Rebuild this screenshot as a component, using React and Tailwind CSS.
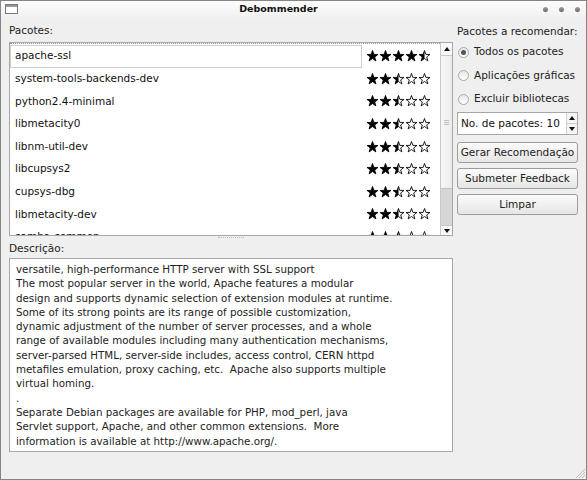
import React from "react";

const STAR = "M6 0 L7.41 4.06 L11.71 4.15 L8.28 6.74 L9.53 10.85 L6 8.4 L2.47 10.85 L3.72 6.74 L0.29 4.15 L4.59 4.06 Z";
const HALF = "M6 0 L6 8.4 L2.47 10.85 L3.72 6.74 L0.29 4.15 L4.59 4.06 Z";

const packages = [
  { name: "apache-ssl", rating: 4.5 },
  { name: "system-tools-backends-dev", rating: 2.5 },
  { name: "python2.4-minimal", rating: 2.5 },
  { name: "libmetacity0", rating: 2.5 },
  { name: "libnm-util-dev", rating: 2.5 },
  { name: "libcupsys2", rating: 2.5 },
  { name: "cupsys-dbg", rating: 2.5 },
  { name: "libmetacity-dev", rating: 2.5 },
  { name: "samba-common", rating: 2.5 },
];

const description = [
  "versatile, high-performance HTTP server with SSL support",
  "The most popular server in the world, Apache features a modular",
  "design and supports dynamic selection of extension modules at runtime.",
  "Some of its strong points are its range of possible customization,",
  "dynamic adjustment of the number of server processes, and a whole",
  "range of available modules including many authentication mechanisms,",
  "server-parsed HTML, server-side includes, access control, CERN httpd",
  "metafiles emulation, proxy caching, etc.  Apache also supports multiple",
  "virtual homing.",
  ".",
  "Separate Debian packages are available for PHP, mod_perl, java",
  "Servlet support, Apache, and other common extensions.  More",
  "information is available at http://www.apache.org/.",
];

function Star({ kind }) {
  return (
    <svg width="13" height="12" viewBox="-0.5 -0.5 13 12.5" className="shrink-0">
      <path d={STAR} fill={kind === "full" ? "#000" : "#fff"} stroke="#000" strokeWidth="0.9" strokeLinejoin="round" />
      {kind === "half" && <path d={HALF} fill="#000" />}
    </svg>
  );
}

function Stars({ rating }) {
  return (
    <div className="flex items-center">
      {[0, 1, 2, 3, 4].map((i) => {
        const kind = rating >= i + 1 ? "full" : rating > i ? "half" : "empty";
        return <Star key={i} kind={kind} />;
      })}
    </div>
  );
}

function Radio({ checked, label }) {
  return (
    <div className="h-[23.5px] flex items-center gap-[5px] pl-[1px]">
      <div className="w-[11px] h-[11px] rounded-full border border-[#a8a8a8] bg-gradient-to-b from-[#e6e6e6] to-white flex items-center justify-center">
        {checked && <div className="w-[5px] h-[5px] rounded-full bg-[#555]" />}
      </div>
      <span className="text-[#222] whitespace-nowrap">{label}</span>
    </div>
  );
}

function Button({ children, className = "" }) {
  return (
    <div className={`h-[21px] rounded-[3px] border border-[#9c9c9c] bg-gradient-to-b from-[#fbfbfb] to-[#e6e6e6] flex items-center justify-center text-[#222] whitespace-nowrap ${className}`}>
      {children}
    </div>
  );
}

export default function App() {
  return (
    <div
      className="w-[587px] h-[480px] bg-[#efefef] border border-[#858585] flex flex-col text-[10.5px] text-[#111] overflow-hidden"
      style={{ fontFamily: '"DejaVu Sans", Verdana, sans-serif' }}
    >
      {/* Title bar */}
      <div className="h-[16px] shrink-0 flex items-center bg-gradient-to-b from-[#fdfdfd] to-[#f1f1f1]">
        <div className="w-[18px] pl-[4px]">
          <svg width="13" height="10" viewBox="0 0 13 10">
            <rect x="0.5" y="0.5" width="12" height="9" fill="#fff" stroke="#777" />
            <rect x="1" y="1" width="11" height="2" fill="#9a9a9a" />
          </svg>
        </div>
        <div className="flex-1 text-center font-bold text-[9.5px] pl-[2px]">Debommender</div>
        <div className="w-[50px] flex items-center gap-[11px] pr-[6px] justify-end">
          {[0, 1, 2].map((i) => (
            <div key={i} className="w-[5px] h-[5px] rounded-full bg-gradient-to-b from-[#a0a0a0] to-[#6a6a6a]" />
          ))}
        </div>
      </div>

      {/* Body */}
      <div className="flex-1 flex px-[8px] gap-[4px] relative">
        {/* Left column */}
        <div className="w-[444px] flex flex-col">
          <div className="h-[25px] flex items-center pt-[3px] text-[#222]">Pacotes:</div>

          <div className="h-[194px] bg-white border border-[#a7a7a7] flex overflow-hidden">
            <div className="flex-1 flex flex-col overflow-hidden border-t border-dotted border-[#999] pt-[1px]">
              {packages.map((p, i) => (
                <div key={p.name} className="h-[22.6px] shrink-0 flex items-center">
                  <div
                    className={`w-[352px] h-full flex items-center pl-[4px] ${
                      i === 0 ? "border border-[#d0d0d0]" : "border border-transparent"
                    }`}
                  >
                    {p.name}
                  </div>
                  <div className="pl-[4px]">
                    <Stars rating={p.rating} />
                  </div>
                </div>
              ))}
            </div>
            {/* Scrollbar */}
            <div className="w-[12px] border-l border-[#c8c8c8] flex flex-col bg-[#f4f4f4]">
              <div className="h-[13px] flex items-center justify-center border-b border-[#c8c8c8] bg-[#f8f8f8]">
                <svg width="6" height="4" viewBox="0 0 6 4"><path d="M0 4 L3 0 L6 4 Z" fill="#111" /></svg>
              </div>
              <div className="h-[133px] bg-gradient-to-r from-[#f7f7f7] to-[#ebebeb] border-b border-[#c4c4c4] flex items-center justify-center">
                <div className="flex flex-col gap-[1px]">
                  <div className="w-[5px] h-px bg-[#c0c0c0]" />
                  <div className="w-[5px] h-px bg-[#c0c0c0]" />
                  <div className="w-[5px] h-px bg-[#c0c0c0]" />
                </div>
              </div>
              <div className="flex-1 bg-[#d6d6d6]" />
              <div className="h-[10px] flex items-center justify-center border-t border-[#c8c8c8] bg-[#f8f8f8]">
                <svg width="6" height="4" viewBox="0 0 6 4"><path d="M0 0 L6 0 L3 4 Z" fill="#111" /></svg>
              </div>
            </div>
          </div>

          {/* Splitter */}
          <div className="h-[4px] flex items-center justify-center">
            <div className="w-[26px] h-[2px] border-t border-dotted border-[#b8b8b8]" />
          </div>

          <div className="h-[18px] flex items-start pt-[1px] text-[#222]">Descrição:</div>

          <div className="h-[194px] bg-white border border-[#a7a7a7] pl-[6px] pt-[3px] leading-[14.3px] text-[10.3px] text-[#222]">
            {description.map((line, i) => (
              <div key={i} className="whitespace-pre">{line}</div>
            ))}
          </div>
        </div>

        {/* Right column */}
        <div className="w-[121px] flex flex-col">
          <div className="h-[23.5px] flex items-center pt-[6px] whitespace-nowrap text-[#222]">Pacotes a recomendar:</div>
          <Radio checked label="Todos os pacotes" />
          <Radio label="Aplicações gráficas" />
          <Radio label="Excluir bibliotecas" />

          <div className="mt-[1px] h-[23px] bg-white border border-[#a7a7a7] flex items-center">
            <div className="flex-1 pl-[3px] whitespace-nowrap">No. de pacotes: 10</div>
            <div className="w-[11px] h-full flex flex-col border-l border-[#d0d0d0]">
              <div className="flex-1 flex items-center justify-center bg-[#f4f4f4] border-b border-[#d0d0d0]">
                <svg width="6" height="4" viewBox="0 0 6 4"><path d="M0 4 L3 0 L6 4 Z" fill="#111" /></svg>
              </div>
              <div className="flex-1 flex items-center justify-center bg-[#f4f4f4]">
                <svg width="6" height="4" viewBox="0 0 6 4"><path d="M0 0 L6 0 L3 4 Z" fill="#111" /></svg>
              </div>
            </div>
          </div>

          <Button className="mt-[7px]">Gerar Recomendação</Button>
          <Button className="mt-[5px]">Submeter Feedback</Button>
          <Button className="mt-[5px]">Limpar</Button>
        </div>

        {/* Resize grip */}
        <svg width="10" height="10" viewBox="0 0 10 10" className="absolute right-[1px] bottom-[1px]">
          <path d="M10 1 L1 10 M10 4 L4 10 M10 7 L7 10" stroke="#b0b0b0" strokeWidth="0.8" />
        </svg>
      </div>
    </div>
  );
}
